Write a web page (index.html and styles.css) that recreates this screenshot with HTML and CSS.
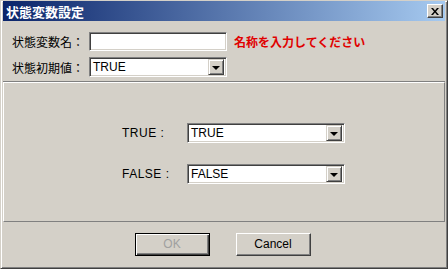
FILE: index.html
```html
<!DOCTYPE html>
<html lang="ja">
<head>
    <meta charset="UTF-8">
    <meta name="viewport" content="width=device-width, initial-scale=1.0">
    <title>状態変数設定</title>
    <link rel="stylesheet" href="styles.css">
</head>
<body>
    <div class="window">
        <div class="titlebar">
            <span class="title">状態変数設定</span>
            <span class="close">
                <svg width="8" height="7" viewBox="0 0 8 7"><path d="M0 0h2l2 2.5L6 0h2L5 3.5 8 7H6L4 4.5 2 7H0l3-3.5z" fill="#000"/></svg>
            </span>
        </div>
        <div class="top">
            <div class="row">
                <span class="label">状態変数名：</span>
                <div class="field"></div>
                <span class="warn">名称を入力してください</span>
            </div>
            <div class="row">
                <span class="label">状態初期値：</span>
                <div class="field combo"><span class="value">TRUE</span><span class="drop"></span></div>
            </div>
        </div>
        <div class="panel">
            <div class="prow">
                <span class="plabel">TRUE :</span>
                <div class="field combo wide"><span class="value">TRUE</span><span class="drop"></span></div>
            </div>
            <div class="prow">
                <span class="plabel">FALSE :</span>
                <div class="field combo wide"><span class="value">FALSE</span><span class="drop"></span></div>
            </div>
        </div>
        <div class="buttons">
            <button class="btn default" disabled>OK</button>
            <button class="btn">Cancel</button>
        </div>
    </div>
</body>
</html>
```

FILE: styles.css
```css
body {
    margin: 0;
    padding: 0;
    background-color: #d4d0c8;
    font-family: "Liberation Sans", "Noto Sans CJK JP", sans-serif;
    font-size: 12px;
}
.window {
    width: 448px;
    height: 269px;
    box-sizing: border-box;
    border: 1px solid;
    border-color: #d4d0c8 #404040 #404040 #d4d0c8;
    box-shadow: inset 1px 1px #fff, inset -1px -1px #808080;
    padding: 0 2px 2px 2px;
    display: flex;
    flex-direction: column;
}
.titlebar {
    height: 20px;
    display: flex;
    align-items: center;
    justify-content: space-between;
    padding: 0 2px 0 3px;
    background: linear-gradient(to right, #0a246a, #a6caf0);
}
.title {
    color: #fff;
    font-family: "Noto Sans CJK JP", sans-serif;
    font-weight: bold;
    font-size: 13px;
}
.close {
    width: 16px;
    height: 14px;
    box-sizing: border-box;
    background-color: #d4d0c8;
    border: 1px solid;
    border-color: #fff #404040 #404040 #fff;
    box-shadow: inset -1px -1px #808080;
    display: flex;
    align-items: center;
    justify-content: center;
}
.top {
    height: 61px;
    box-sizing: border-box;
    padding: 11px 0 0 9px;
    display: flex;
    flex-direction: column;
    gap: 6px;
    border-bottom: 1px solid #808080;
}
.row {
    display: flex;
    align-items: center;
}
.label {
    font-family: "Noto Sans CJK JP", sans-serif;
    width: 77px;
}
.warn {
    color: #e00000;
    font-family: "Noto Sans CJK JP", sans-serif;
    font-weight: bold;
    margin-left: 7px;
}
.field {
    width: 138px;
    height: 19px;
    box-sizing: border-box;
    background-color: #fff;
    border: 1px solid;
    border-color: #808080 #fff #fff #808080;
    box-shadow: inset 1px 1px #404040, inset -1px -1px #d4d0c8;
    display: flex;
    align-items: center;
}
.combo {
    height: 20px;
    padding: 2px;
}
.value {
    flex: 1;
    padding-left: 1px;
}
.drop {
    width: 16px;
    height: 16px;
    box-sizing: border-box;
    background-color: #d4d0c8;
    border: 1px solid;
    border-color: #d4d0c8 #404040 #404040 #d4d0c8;
    box-shadow: inset 1px 1px #fff, inset -1px -1px #808080;
    display: flex;
    align-items: center;
    justify-content: center;
}
.drop::after {
    content: "";
    border-left: 4px solid transparent;
    border-right: 4px solid transparent;
    border-top: 4px solid #000;
    margin-top: 1px;
}
.panel {
    height: 140px;
    box-sizing: border-box;
    border: 1px solid;
    border-color: #fff #808080 #808080 #fff;
    display: flex;
    flex-direction: column;
    justify-content: center;
    gap: 21px;
    padding: 3px 0 0 118px;
}
.prow {
    display: flex;
    align-items: center;
}
.plabel {
    width: 65px;
    letter-spacing: 0.5px;
}
.wide {
    width: 158px;
}
.buttons {
    flex: 1;
    display: flex;
    justify-content: center;
    align-items: center;
    gap: 26px;
    padding-right: 3px;
}
.btn {
    width: 75px;
    height: 23px;
    font-family: "Liberation Sans", sans-serif;
    font-size: 12px;
    color: #000;
    background-color: #d4d0c8;
    border: 1px solid;
    border-color: #fff #404040 #404040 #fff;
    box-shadow: inset -1px -1px #808080;
    padding: 0;
}
.default {
    border: 1px solid #000;
    box-shadow: inset 1px 1px #fff, inset -1px -1px #404040, inset -2px -2px #808080;
    color: #a0a0a0;
}
```
